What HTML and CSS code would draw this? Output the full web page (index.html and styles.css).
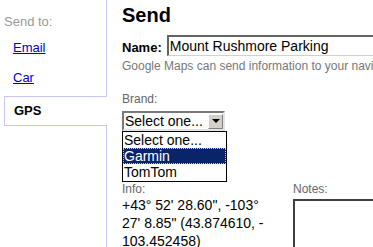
FILE: index.html
```html
<!DOCTYPE html>
<html lang="en">
<head>
    <meta charset="UTF-8">
    <meta name="viewport" content="width=device-width, initial-scale=1.0">
    <title>Send</title>
    <link rel="stylesheet" href="styles.css">
</head>
<body>
    <div class="page">
        <div class="sidebar">
            <div class="send-to">Send to:</div>
            <a class="nav-item" href="#">Email</a>
            <a class="nav-item" href="#">Car</a>
            <div class="nav-item selected">GPS</div>
        </div>

        <div class="main">
            <h2>Send</h2>
            <div class="name-row">
                <label for="name">Name:</label>
                <input type="text" id="name" value="Mount Rushmore Parking">
            </div>
            <p class="help">Google Maps can send information to your navigation device.</p>

            <div class="label brand-label">Brand:</div>
            <div class="select">
                <span>Select one...</span>
                <span class="arrow"></span>
            </div>
            <ul class="options">
                <li>Select one...</li>
                <li class="active">Garmin</li>
                <li>TomTom</li>
            </ul>

            <div class="details">
                <div class="info">
                    <div class="label">Info:</div>
                    <div class="coords">+43° 52' 28.60", -103° 27' 8.85" (43.874610, -<wbr>103.452458)</div>
                </div>
                <div class="notes">
                    <div class="label">Notes:</div>
                    <textarea id="notes"></textarea>
                </div>
            </div>
        </div>
    </div>
</body>
</html>
```

FILE: styles.css
```css
body {
    margin: 0;
    font-family: "Liberation Sans", Arial, sans-serif;
    background: #fff;
    overflow: hidden;
}
.page {
    display: flex;
    height: 247px;
    overflow: hidden;
}
.sidebar {
    width: 106px;
    flex-shrink: 0;
    border-right: 1px solid #c6c6f6;
    padding-top: 14px;
}
.send-to {
    color: #999;
    font-size: 13px;
    line-height: 15px;
    padding-left: 4px;
    margin-bottom: 4px;
}
.nav-item {
    display: block;
    font-size: 13px;
    line-height: 15px;
    padding: 7px 0 8px 13px;
    color: #00c;
}
.nav-item.selected {
    position: relative;
    margin: 3px -1px 0 4px;
    padding: 6px 0 7px 9px;
    border: 1px solid #c6c6f6;
    border-right: none;
    background: #fff;
    color: #000;
    font-weight: bold;
}
.main {
    flex: 1;
    min-width: 0;
    padding-left: 15px;
    overflow: hidden;
}
h2 {
    margin: 0;
    padding-top: 3px;
    font-size: 20px;
    line-height: 24px;
}
.name-row {
    display: flex;
    margin-top: 8px;
}
.name-row label {
    font-size: 13px;
    font-weight: bold;
    line-height: 15px;
    margin: 5px 5px 0 0;
}
.name-row input {
    width: 260px;
    height: 21px;
    box-sizing: border-box;
    flex-shrink: 0;
    margin: 0;
    padding: 0 1px;
    font-family: inherit;
    font-size: 14px;
    line-height: 17px;
    border-style: solid;
    border-width: 2px 1px 1px 2px;
    border-color: #646464 #d4d0c8 #d4d0c8 #646464;
}
.help {
    margin: 4px 0 0;
    font-size: 12px;
    line-height: 13px;
    color: #777;
    white-space: nowrap;
}
.label {
    font-size: 12px;
    line-height: 13px;
    color: #666;
}
.brand-label {
    margin-top: 20px;
}
.select {
    display: flex;
    justify-content: space-between;
    align-items: center;
    width: 103px;
    height: 20px;
    box-sizing: border-box;
    margin-top: 5px;
    padding-left: 1px;
    border: 2px solid;
    border-color: #7a7a7a #e4e4e4 #e4e4e4 #7a7a7a;
    font-size: 14px;
    line-height: 16px;
}
.arrow {
    width: 15px;
    height: 15px;
    box-sizing: border-box;
    background: #d4d0c8;
    border: 1px solid;
    border-color: #fff #808080 #808080 #fff;
    display: flex;
    align-items: center;
    justify-content: center;
}
.arrow::after {
    content: "";
    border-left: 4px solid transparent;
    border-right: 4px solid transparent;
    border-top: 4px solid #000;
}
.options {
    list-style: none;
    margin: 0;
    padding: 0 0 1px;
    width: 105px;
    box-sizing: border-box;
    border: 1px solid #000;
    font-size: 14px;
    line-height: 16px;
}
.options li {
    padding-left: 1px;
}
.options .active {
    background: #0a246a;
    color: #fff;
    outline: 1px dotted #d8c890;
    outline-offset: -1px;
}
.details {
    display: flex;
    margin-top: 1px;
}
.info {
    width: 155px;
    flex-shrink: 0;
    margin-right: 16px;
}
.coords {
    font-size: 14px;
    line-height: 18px;
}
.notes {
    flex-shrink: 0;
}
.notes textarea {
    display: block;
    width: 120px;
    height: 60px;
    margin-top: 3px;
    border-style: solid;
    border-width: 2px 1px 1px 2px;
    border-color: #404040 #d4d0c8 #d4d0c8 #404040;
    resize: none;
}
```
